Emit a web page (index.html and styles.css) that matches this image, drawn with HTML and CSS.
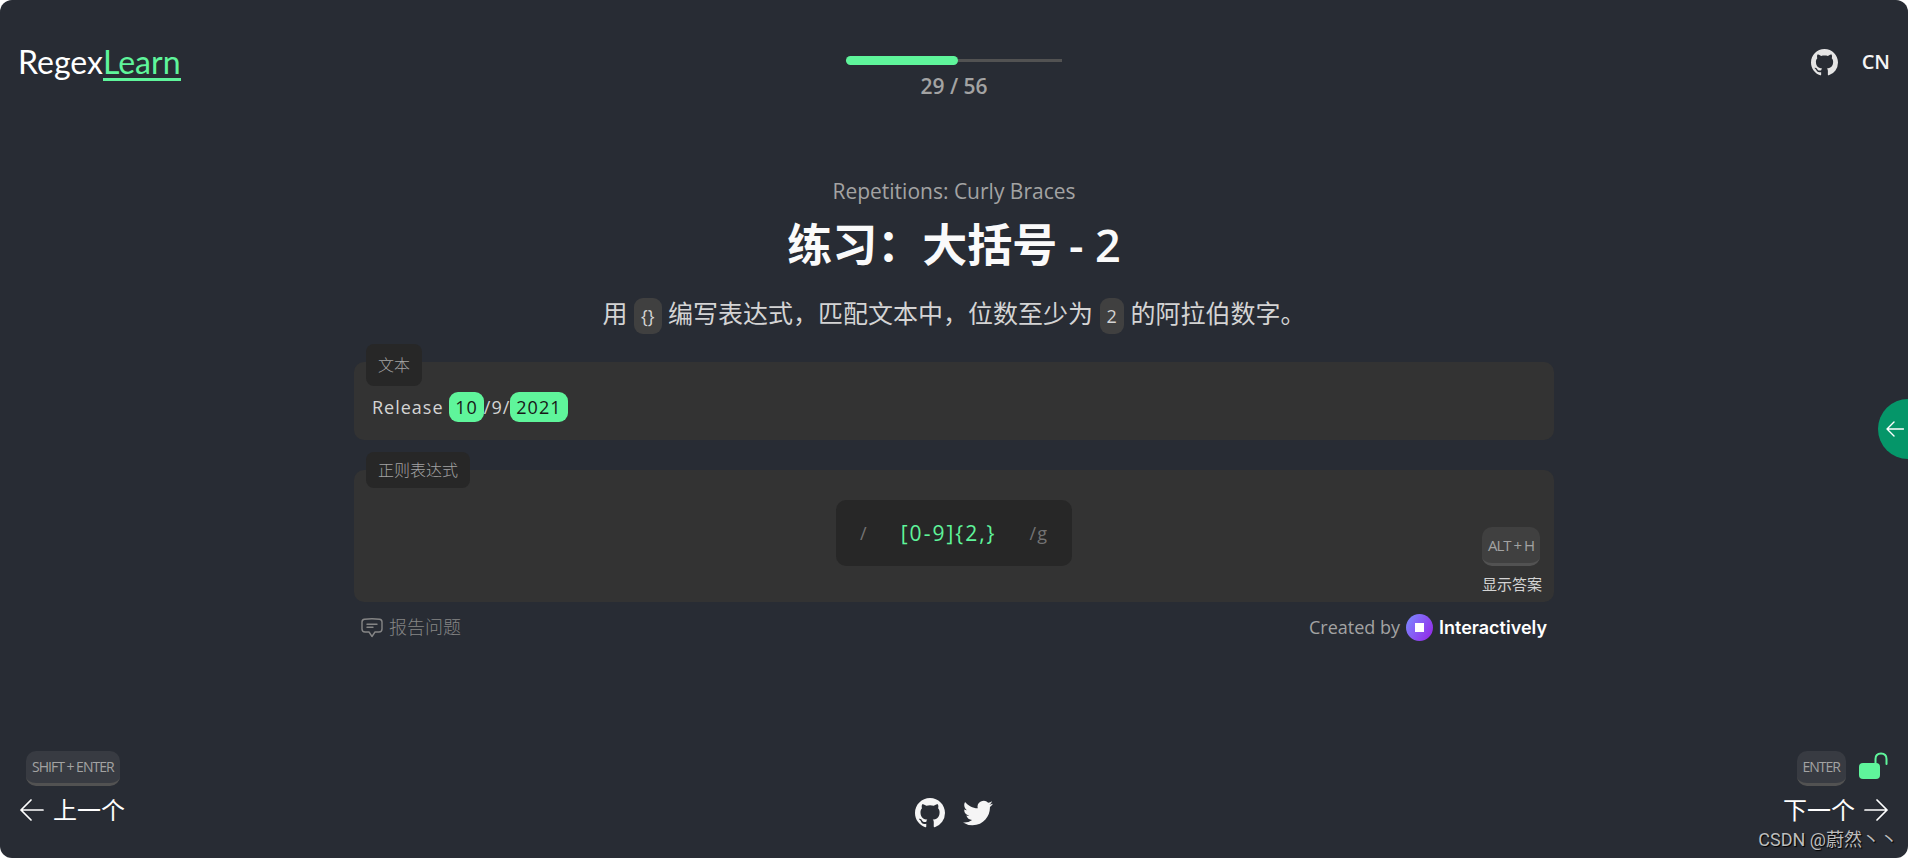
FILE: index.html
```html
<!DOCTYPE html>
<html lang="zh-CN">
<head>
    <meta charset="UTF-8">
    <meta name="viewport" content="width=device-width, initial-scale=1.0">
    <title>RegexLearn</title>
    <link rel="stylesheet" href="styles.css">
</head>
<body>
    <div class="app">
        <header class="header">
            <a class="logo" href="#">Regex<span>Learn</span></a>
            <div class="progress">
                <div class="progress-track">
                    <div class="progress-bar" style="width: 52%"></div>
                </div>
                <span class="progress-text">29 / 56</span>
            </div>
            <div class="header-links">
                <a href="#" aria-label="GitHub">
                    <svg class="icon-github" viewBox="0 0 16 16" fill="currentColor"><path d="M8 0C3.58 0 0 3.58 0 8c0 3.54 2.29 6.53 5.47 7.59.4.07.55-.17.55-.38 0-.19-.01-.82-.01-1.49-2.01.37-2.53-.49-2.69-.94-.09-.23-.48-.94-.82-1.13-.28-.15-.68-.52-.01-.53.63-.01 1.08.58 1.23.82.72 1.21 1.87.87 2.33.66.07-.52.28-.87.51-1.07-1.78-.2-3.64-.89-3.64-3.95 0-.87.31-1.59.82-2.15-.08-.2-.36-1.02.08-2.12 0 0 .67-.21 2.2.82.64-.18 1.32-.27 2-.27s1.36.09 2 .27c1.53-1.04 2.2-.82 2.2-.82.44 1.1.16 1.92.08 2.12.51.56.82 1.27.82 2.15 0 3.07-1.87 3.75-3.65 3.95.29.25.54.73.54 1.48 0 1.07-.01 1.93-.01 2.2 0 .21.15.46.55.38A8.01 8.01 0 0 0 16 8c0-4.42-3.58-8-8-8z"/></svg>
                </a>
                <button class="lang">CN</button>
            </div>
        </header>

        <main class="lesson">
            <p class="subtitle">Repetitions: Curly Braces</p>
            <h1>练习：大括号 - 2</h1>
            <p class="description">用 <code>{}</code> 编写表达式，匹配文本中，位数至少为 <code>2</code> 的阿拉伯数字。</p>

            <section class="box text-box">
                <h2 class="box-label tall">文本</h2>
                <p class="sample">Release <mark>10</mark>/9/<mark>2021</mark></p>
            </section>

            <section class="box regex-box">
                <label class="box-label" for="regex">正则表达式</label>
                <div class="regex">
                    <span>/</span>
                    <input type="text" id="regex" value="[0-9]{2,}" spellcheck="false" autocomplete="off">
                    <span>/g</span>
                </div>
                <button class="answer"><kbd>ALT + H</kbd><span>显示答案</span></button>
            </section>

            <div class="credits">
                <a class="report" href="#">
                    <svg viewBox="0 0 22 20" fill="none" stroke="currentColor" stroke-width="1.4" stroke-linecap="round" stroke-linejoin="round"><path d="M1 4Q1 1.5 3.5 1.2Q11 .4 18.5 1.2Q21 1.5 21 4V11Q21 14 18 14H14L11 18.5L8 14H4Q1 14 1 11Z"/><path d="M6 6.2H16M6 9.2H12"/></svg>
                    报告问题
                </a>
                <a class="created" href="#">
                    Created by
                    <svg viewBox="0 0 27 27"><defs><linearGradient id="brand" x1="0" y1="0.2" x2="1" y2="0.8"><stop offset="0" stop-color="#7c86ff"/><stop offset="1" stop-color="#9329e8"/></linearGradient></defs><circle cx="13.5" cy="13.5" r="13.5" fill="url(#brand)"/><path d="M9 9h9v9H9z" fill="#fff"/></svg>
                    <strong>Interactively</strong>
                </a>
            </div>
        </main>

        <footer class="footer">
            <button class="step prev">
                <kbd>SHIFT + ENTER</kbd>
                <span class="step-name">
                    <svg class="icon-arrow" viewBox="0 0 24 24" fill="none" stroke="currentColor" stroke-width="1.7" stroke-linecap="round" stroke-linejoin="round"><path d="M23 12H1M11 2L1 12l10 10"/></svg>
                    上一个
                </span>
            </button>
            <div class="social">
                <a href="#" aria-label="GitHub">
                    <svg viewBox="0 0 16 16" fill="currentColor"><path d="M8 0C3.58 0 0 3.58 0 8c0 3.54 2.29 6.53 5.47 7.59.4.07.55-.17.55-.38 0-.19-.01-.82-.01-1.49-2.01.37-2.53-.49-2.69-.94-.09-.23-.48-.94-.82-1.13-.28-.15-.68-.52-.01-.53.63-.01 1.08.58 1.23.82.72 1.21 1.87.87 2.33.66.07-.52.28-.87.51-1.07-1.78-.2-3.64-.89-3.64-3.95 0-.87.31-1.59.82-2.15-.08-.2-.36-1.02.08-2.12 0 0 .67-.21 2.2.82.64-.18 1.32-.27 2-.27s1.36.09 2 .27c1.53-1.04 2.2-.82 2.2-.82.44 1.1.16 1.92.08 2.12.51.56.82 1.27.82 2.15 0 3.07-1.87 3.75-3.65 3.95.29.25.54.73.54 1.48 0 1.07-.01 1.93-.01 2.2 0 .21.15.46.55.38A8.01 8.01 0 0 0 16 8c0-4.42-3.58-8-8-8z"/></svg>
                </a>
                <a href="#" aria-label="Twitter">
                    <svg viewBox="0 0 24 24" fill="currentColor"><path d="M23.953 4.57a10 10 0 0 1-2.825.775 4.958 4.958 0 0 0 2.163-2.723c-.951.555-2.005.959-3.127 1.184a4.92 4.92 0 0 0-8.384 4.482C7.69 8.095 4.067 6.13 1.64 3.162a4.822 4.822 0 0 0-.666 2.475c0 1.71.87 3.213 2.188 4.096a4.904 4.904 0 0 1-2.228-.616v.06a4.923 4.923 0 0 0 3.946 4.827 4.996 4.996 0 0 1-2.212.085 4.936 4.936 0 0 0 4.604 3.417 9.867 9.867 0 0 1-6.102 2.105c-.39 0-.779-.023-1.17-.067a13.995 13.995 0 0 0 7.557 2.209c9.053 0 13.998-7.496 13.998-13.985 0-.21 0-.42-.015-.63A9.935 9.935 0 0 0 24 4.59z"/></svg>
                </a>
            </div>
            <button class="step next">
                <span class="step-keys">
                    <kbd>ENTER</kbd>
                    <svg class="icon-lock" viewBox="0 0 30 34"><rect x="1" y="11" width="21" height="16" rx="4" fill="currentColor"/><path d="M17.5 11V7Q17.5 1.500 23 1.500T28.500 7V12" fill="none" stroke="currentColor" stroke-width="2" stroke-linecap="round"/></svg>
                </span>
                <span class="step-name">
                    下一个
                    <svg class="icon-arrow" viewBox="0 0 24 24" fill="none" stroke="currentColor" stroke-width="1.7" stroke-linecap="round" stroke-linejoin="round"><path d="M1 12h22M13 2l10 10-10 10"/></svg>
                </span>
            </button>
        </footer>

        <button class="drawer" aria-label="Open menu">
            <svg viewBox="0 0 18 16" fill="none" stroke="currentColor" stroke-width="1.4" stroke-linecap="round" stroke-linejoin="round"><path d="M17.5 8H1M8 1L1 8l7 7"/></svg>
        </button>
        <span class="watermark">CSDN @蔚然丶丶</span>
    </div>
</body>
</html>
```
FILE: styles.css
```css
* {
    box-sizing: border-box;
}
body {
    margin: 0;
    background-color: #ffffff;
    font-family: 'Open Sans', 'Noto Sans CJK SC', sans-serif;
    font-size: 16px;
    color: #d4d4d4;
}
h1, h2, p {
    margin: 0;
}
a {
    color: inherit;
    text-decoration: none;
}
button {
    padding: 0;
    border: none;
    background: none;
    color: inherit;
    font: inherit;
    cursor: pointer;
}
svg {
    display: block;
}
.app {
    position: relative;
    display: flex;
    flex-direction: column;
    min-height: 100vh;
    overflow: hidden;
    background-color: #282c34;
    border-radius: 12px;
}

/* Header */
.header {
    display: grid;
    grid-template-columns: 1fr 216px 1fr;
    align-items: start;
    padding: 40px 18px 0;
}
.logo {
    justify-self: start;
    padding-top: 4px;
    font-family: Lato, sans-serif;
    font-size: 32px;
    line-height: 36px;
    color: #ffffff;
}
.logo span {
    display: inline-block;
    color: #5ff59b;
    border-bottom: 3px solid #5ff59b;
    line-height: 32px;
}
.progress {
    padding-top: 16px;
    text-align: center;
}
.progress-track {
    display: flex;
    align-items: center;
    height: 9px;
    background: linear-gradient(#525252, #525252) center / 100% 3px no-repeat;
}
.progress-bar {
    height: 9px;
    border-radius: 5px;
    background-color: #5ff59b;
}
.progress-text {
    display: block;
    margin-top: 6px;
    font-size: 21px;
    font-weight: 600;
    line-height: 30px;
    color: #a3a3a3;
}
.header-links {
    display: flex;
    align-items: center;
    justify-content: flex-end;
    gap: 24px;
    padding-top: 8px;
    color: #e5e5e5;
}
.icon-github {
    width: 27px;
    height: 27px;
}
.lang {
    font-size: 20px;
    font-weight: 600;
    line-height: 28px;
    color: #f5f5f5;
}

/* Lesson */
.lesson {
    width: 100%;
    max-width: 1200px;
    margin: 0 auto;
    padding-top: 76px;
}
.subtitle {
    font-size: 21px;
    line-height: 28px;
    text-align: center;
    color: #a3a3a3;
}
h1 {
    margin-top: 12px;
    font-size: 45px;
    font-weight: 600;
    line-height: 56px;
    text-align: center;
    color: #fafafa;
}
.description {
    margin: 22px 0 28px;
    font-size: 25px;
    line-height: 36px;
    text-align: center;
}
.description code {
    display: inline-block;
    padding: 0 7px;
    border-radius: 9px;
    background-color: #404040;
    font-family: inherit;
    font-size: 18px;
}
.box {
    position: relative;
    border-radius: 10px;
    background-color: #333333;
}
.box-label {
    position: absolute;
    top: -18px;
    left: 12px;
    padding: 0 12px;
    border-radius: 8px;
    background-color: #272727;
    font-size: 16px;
    font-weight: 300;
    line-height: 36px;
    color: #a3a3a3;
}
.box-label.tall {
    line-height: 42px;
}
.text-box {
    padding: 30px 18px 18px;
}
.sample {
    font-size: 18px;
    line-height: 30px;
    letter-spacing: 1px;
}
.sample mark {
    display: inline-block;
    padding: 0 6px;
    border-radius: 9px;
    background-color: #5ff59b;
    color: #171717;
}
.regex-box {
    display: flex;
    justify-content: center;
    margin-top: 30px;
    padding: 30px 0 36px;
}
.regex {
    display: flex;
    align-items: center;
    justify-content: space-between;
    width: 236px;
    height: 66px;
    padding: 0 24px;
    border-radius: 10px;
    background-color: #272727;
    font-size: 18px;
    letter-spacing: 1px;
    color: #737373;
}
.regex input {
    width: 112px;
    padding: 0;
    border: none;
    outline: none;
    background: none;
    font-family: inherit;
    font-size: 21px;
    letter-spacing: 2px;
    text-align: center;
    color: #5ff59b;
}
kbd {
    display: block;
    padding: 0 6px;
    border-bottom: 3px solid #525252;
    border-radius: 10px;
    background-color: #383b42;
    font-family: inherit;
    font-size: 14px;
    line-height: 32px;
    letter-spacing: -1px;
    color: #a3a3a3;
}
.answer {
    position: absolute;
    right: 12px;
    bottom: 7px;
    display: flex;
    flex-direction: column;
    align-items: flex-start;
    gap: 7px;
    font-size: 15px;
    line-height: 22px;
}
.answer kbd {
    background-color: #404040;
    font-size: 15px;
    line-height: 36px;
}
.credits {
    display: flex;
    align-items: center;
    justify-content: space-between;
    padding: 12px 7px;
}
.report, .created {
    display: flex;
    align-items: center;
    gap: 6px;
    font-size: 18px;
    line-height: 27px;
}
.report {
    font-weight: 300;
    color: #858585;
}
.report svg {
    width: 22px;
    height: 20px;
}
.created {
    color: #a3a3a3;
}
.created svg {
    width: 27px;
    height: 27px;
}
.created strong {
    font-family: Inter, sans-serif;
    font-weight: 600;
    color: #ffffff;
}

/* Footer */
.footer {
    display: grid;
    grid-template-columns: 1fr auto 1fr;
    align-items: end;
    margin-top: auto;
    padding: 0 20px 30px;
}
.step {
    display: flex;
    flex-direction: column;
    gap: 6px;
    color: #ffffff;
}
.step-name {
    display: flex;
    align-items: center;
    gap: 9px;
    font-size: 24px;
    line-height: 36px;
}
.icon-arrow {
    width: 24px;
    height: 24px;
}
.prev {
    justify-self: start;
    align-items: flex-start;
}
.prev kbd {
    margin-left: 6px;
}
.next {
    justify-self: end;
    align-items: flex-end;
}
.step-keys {
    display: flex;
    align-items: center;
    gap: 12px;
}
.icon-lock {
    width: 30px;
    height: 34px;
    color: #5ff59b;
}
.social {
    display: flex;
    gap: 18px;
    color: #f5f5f5;
}
.social svg {
    width: 30px;
    height: 30px;
}

.drawer {
    position: absolute;
    top: 50%;
    right: -30px;
    width: 60px;
    height: 60px;
    margin-top: -30px;
    padding-left: 8px;
    border-radius: 50%;
    background-color: #059669;
    color: #ffffff;
}
.drawer svg {
    width: 18px;
    height: 16px;
}
.watermark {
    position: absolute;
    right: 10px;
    bottom: 6px;
    font-family: Roboto, 'Noto Sans CJK SC', sans-serif;
    font-size: 18px;
    line-height: 24px;
    color: #bdbdbd;
    text-shadow: 1px 1px 1px #000000;
}
```
